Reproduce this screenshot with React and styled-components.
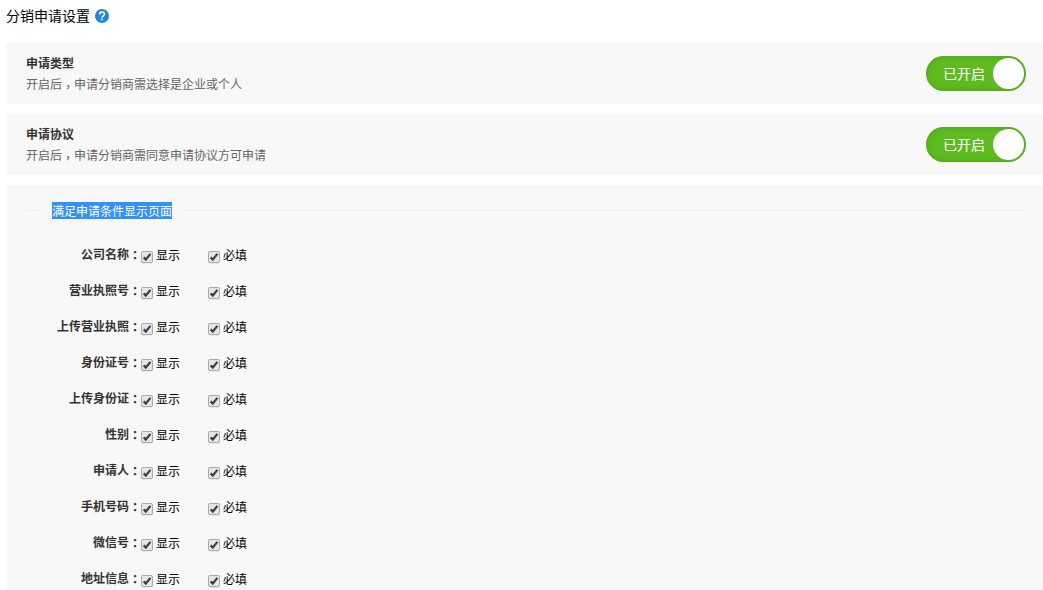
import React from 'react';
import styled, { createGlobalStyle } from 'styled-components';

const GlobalStyle = createGlobalStyle`
	* {
		box-sizing: border-box;
	}
	body {
		margin: 0;
		background: #fff;
		overflow: hidden;
		font-family: "Noto Sans CJK SC", sans-serif;
		font-size: 12px;
		color: #000;
	}
`;

const Page = styled.main`
	height: 590px;
	padding-left: 6px;
	overflow: hidden;
`;

const Header = styled.header`
	display: flex;
	align-items: center;
	gap: 5px;
	height: 43px;
	padding-bottom: 11px;
`;

const Title = styled.h1`
	margin: 0;
	padding-bottom: 2px;
	font-size: 14px;
	line-height: 20px;
	font-weight: 400;
`;

const HelpIcon = styled.svg`
	width: 14px;
	height: 14px;
`;

const Panel = styled.section`
	display: flex;
	justify-content: space-between;
	align-items: center;
	height: 61px;
	margin-bottom: 10px;
	padding: 0 17px 0 20px;
	background: #f8f8f8;
`;

const PanelInfo = styled.div`
	padding-bottom: 2px;
`;

const PanelTitle = styled.h2`
	margin: 0;
	font-size: 12px;
	line-height: 21px;
	font-weight: 700;
	color: #333;
`;

const PanelText = styled.p`
	margin: 0;
	line-height: 21px;
	color: #666;
`;

// the TC face centres full-width punctuation in its box
const Punctuation = styled.span`
	font-family: "Noto Sans CJK TC", sans-serif;
	line-height: 1;
	vertical-align: ${(props) => props.$drop};
`;

const Switch = styled.button`
	display: flex;
	justify-content: space-between;
	align-items: center;
	width: 100px;
	height: 35px;
	padding: 0 2px 0 17px;
	border: 0;
	border-radius: 18px;
	background: #5dbb1f;
	box-shadow: inset 0 0 6px rgba(0, 0, 0, 0.16);
	color: #fff;
	font-family: inherit;
	font-size: 14px;
	line-height: 20px;
`;

const SwitchText = styled.span`
	padding-bottom: 2px;
`;

const Knob = styled.span`
	width: 31px;
	height: 31px;
	border-radius: 50%;
	background: #fff;
`;

const FormPanel = styled.section`
	height: 420px;
	padding: 16px 16px 0 20px;
	background: #f8f8f8;
`;

const Legend = styled.div`
	display: flex;
	align-items: center;
	height: 19px;
	margin-bottom: 18px;
	&::before,
	&::after {
		content: "";
		height: 1px;
		background: #eee;
	}
	&::before {
		width: 16px;
		margin-right: 10px;
	}
	&::after {
		flex: 1;
		margin-left: 10px;
	}
`;

const Selected = styled.span`
	height: 17px;
	line-height: 17px;
	background: #3390ff;
	color: #fff;
`;

const Row = styled.div`
	display: flex;
	align-items: center;
	height: 36px;
`;

const RowLabel = styled.div`
	width: 115px;
	padding-bottom: 4px;
	text-align: right;
	line-height: 18px;
	font-weight: 700;
	color: #333;
`;

const Option = styled.label`
	display: flex;
	align-items: center;
	width: 67px;
	line-height: 18px;
`;

const OptionText = styled.span`
	padding-bottom: 2px;
`;

const Box = styled.svg`
	width: 12px;
	height: 13px;
	margin: 3px 3px 0 0;
`;

const panels = [
	{ title: '申请类型', lead: '开启后', text: '申请分销商需选择是企业或个人' },
	{ title: '申请协议', lead: '开启后', text: '申请分销商需同意申请协议方可申请' },
];

const fields = [
	'公司名称',
	'营业执照号',
	'上传营业执照',
	'身份证号',
	'上传身份证',
	'性别',
	'申请人',
	'手机号码',
	'微信号',
	'地址信息',
];

const Check = ({ children }) => (
	<Option>
		<Box viewBox="0 0 12 13">
			<rect x="0.5" y="1" width="11" height="11.5" rx="1.5" fill="#d8d8d8" />
			<rect x="0.5" y="0.5" width="11" height="11" rx="1.5" fill="#e6e6e6" stroke="#ababab" />
			<path d="M2.7 6.4L4.8 8.6L9.4 2.9" fill="none" stroke="#404040" strokeWidth="2.3" />
		</Box>
		<OptionText>{children}</OptionText>
	</Option>
);

const App = () => {
	return (
		<Page>
			<GlobalStyle />
			<Header>
				<Title>分销申请设置</Title>
				<HelpIcon viewBox="0 0 14 14">
					<circle cx="7" cy="7" r="7" fill="#1e88d8" />
					<path d="M4.6 5.4C4.6 2.2 9.5 2.2 9.5 5.1C9.5 6.9 7 6.8 7 8.7" fill="none" stroke="#fff" strokeWidth="1.6" />
					<rect x="6.1" y="9.7" width="1.8" height="1.7" fill="#fff" />
				</HelpIcon>
			</Header>
			{panels.map((panel) => (
				<Panel key={panel.title}>
					<PanelInfo>
						<PanelTitle>{panel.title}</PanelTitle>
						<PanelText>
							{panel.lead}
							<Punctuation $drop="-3px" lang="zh-TW">，</Punctuation>
							{panel.text}
						</PanelText>
					</PanelInfo>
					<Switch>
						<SwitchText>已开启</SwitchText>
						<Knob />
					</Switch>
				</Panel>
			))}
			<FormPanel>
				<Legend>
					<Selected>满足申请条件显示页面</Selected>
				</Legend>
				{fields.map((field) => (
					<Row key={field}>
						<RowLabel>
							{field}
							<Punctuation $drop="-1px" lang="zh-TW">：</Punctuation>
						</RowLabel>
						<Check>显示</Check>
						<Check>必填</Check>
					</Row>
				))}
			</FormPanel>
		</Page>
	);
};

export default App;
